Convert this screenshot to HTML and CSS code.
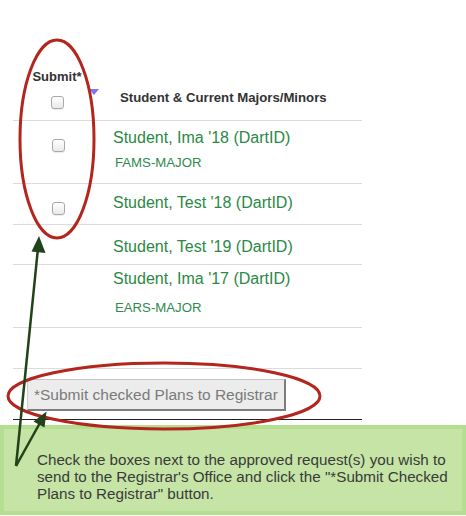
FILE: index.html
```html
<!DOCTYPE html>
<html>
<head>
<meta charset="utf-8">
<link rel="stylesheet" href="styles.css">
</head>
<body>
<div class="page">
  <div class="plans">
    <div class="head">
      <div class="head-submit">
        <div class="submit-label">Submit*</div>
        <span class="box"></span>
        <span class="sort"></span>
      </div>
      <div class="head-student">Student &amp; Current Majors/Minors</div>
    </div>
    <div class="row row-1">
      <div class="cell-box"><span class="box"></span></div>
      <div class="cell-student">
        <div class="name">Student, Ima '18 (DartID)</div>
        <div class="major major-1">FAMS-MAJOR</div>
      </div>
    </div>
    <div class="row row-2">
      <div class="cell-box"><span class="box"></span></div>
      <div class="cell-student">
        <div class="name">Student, Test '18 (DartID)</div>
      </div>
    </div>
    <div class="row row-3">
      <div class="cell-box"></div>
      <div class="cell-student">
        <div class="name">Student, Test '19 (DartID)</div>
      </div>
    </div>
    <div class="row row-4">
      <div class="cell-box"></div>
      <div class="cell-student">
        <div class="name">Student, Ima '17 (DartID)</div>
        <div class="major major-4">EARS-MAJOR</div>
      </div>
    </div>
    <div class="row row-5">
      <div class="cell-box"></div>
      <div class="cell-student"></div>
    </div>
    <div class="footer">
      <button class="submit-btn" type="button">*Submit checked Plans to Registrar</button>
    </div>
  </div>
  <div class="note">Check the boxes next to the approved request(s) you wish to send to the Registrar's Office and click the "*Submit Checked Plans to Registrar" button.</div>

  <svg class="marks" width="466" height="516" viewBox="0 0 466 516">
    <ellipse cx="57" cy="139" rx="37" ry="99" fill="none" stroke="#b3261e" stroke-width="3"/>
    <ellipse cx="164" cy="396" rx="156" ry="33" fill="none" stroke="#b3261e" stroke-width="3"/>
    <line x1="16" y1="466" x2="38" y2="248" stroke="#22421a" stroke-width="2.5"/>
    <polygon points="39,236 45.5,253 31.5,251.5" fill="#22421a"/>
    <line x1="16" y1="466" x2="41" y2="421" stroke="#22421a" stroke-width="2.5"/>
    <polygon points="46.5,411.5 44.5,427.5 33.5,421.5" fill="#22421a"/>
  </svg>
</div>
</body>
</html>
```
FILE: styles.css
```css
html, body {
  margin: 0;
  padding: 0;
  background: #ffffff;
}

.page {
  position: relative;
  width: 466px;
  height: 516px;
  padding-top: 60px;
  box-sizing: border-box;
  font-family: "Liberation Sans", Arial, sans-serif;
  overflow: hidden;
}

.plans {
  margin-left: 13px;
  width: 349px;
}

.head {
  display: grid;
  grid-template-columns: 88px 1fr;
  height: 60px;
  border-bottom: 1px solid #dcdcdc;
}

.head-submit {
  position: relative;
  display: flex;
  flex-direction: column;
  align-items: center;
  padding-top: 9px;
}

.submit-label {
  font-size: 13px;
  font-weight: bold;
  line-height: 16px;
  color: #333;
}

.head-submit .box {
  margin-top: 11px;
}

.sort {
  position: absolute;
  left: 76px;
  top: 29px;
  width: 0;
  height: 0;
  border-left: 5px solid transparent;
  border-right: 5px solid transparent;
  border-top: 6px solid #7878f0;
}

.head-student {
  padding-top: 30px;
  padding-left: 19px;
  font-size: 13.2px;
  font-weight: bold;
  line-height: 16px;
  color: #333;
}

.box {
  display: block;
  width: 11px;
  height: 11px;
  border: 1px solid #a9a9a9;
  border-radius: 3px;
  background: linear-gradient(#ffffff, #e9e9e9);
  box-shadow: 0 1px 1px rgba(0,0,0,0.08);
}

.row {
  display: grid;
  grid-template-columns: 88px 1fr;
  border-bottom: 1px solid #dcdcdc;
}

.row-1 { height: 62px; }
.row-2 { height: 40px; }
.row-3 { height: 39px; }
.row-4 { height: 62px; }
.row-5 { height: 40px; }

.cell-box {
  display: flex;
  justify-content: center;
  padding-left: 3px;
  padding-top: 18px;
}

.cell-student {
  padding-left: 12px;
}

.row-1 .cell-student { padding-top: 8px; }
.row-2 .cell-student { padding-top: 10px; }
.row-3 .cell-student { padding-top: 13px; }
.row-4 .cell-student { padding-top: 5px; }

.name {
  font-size: 16px;
  line-height: 18px;
  color: #2b8846;
}

.major {
  font-size: 13.2px;
  line-height: 16px;
  color: #2f8a50;
  padding-left: 2px;
}

.major-1 { margin-top: 8px; }
.major-4 { margin-top: 12px; }

.footer {
  height: 51px;
  padding-top: 10px;
  padding-left: 14px;
  box-sizing: border-box;
  border-bottom: 1px solid #222;
}

.submit-btn {
  display: block;
  width: 259px;
  height: 32px;
  margin: 0;
  padding: 0 0 0 6px;
  text-align: left;
  font-family: "Liberation Sans", Arial, sans-serif;
  font-size: 15.5px;
  color: #7a7a7a;
  background: #ececec;
  border-style: solid;
  border-width: 1px 2px 2px 1px;
  border-color: #c4c4c4 #7d7d7d #7d7d7d #cfcfcf;
  border-radius: 0;
}

.note {
  margin-top: 5px;
  height: 90px;
  box-sizing: border-box;
  border: 4px solid #b4de90;
  background: #c5e4a5;
  padding: 22px 0 0 33px;
  font-size: 15.2px;
  line-height: 17px;
  color: #3a3a3a;
}

.marks {
  position: absolute;
  left: 0;
  top: 0;
  pointer-events: none;
}
```
